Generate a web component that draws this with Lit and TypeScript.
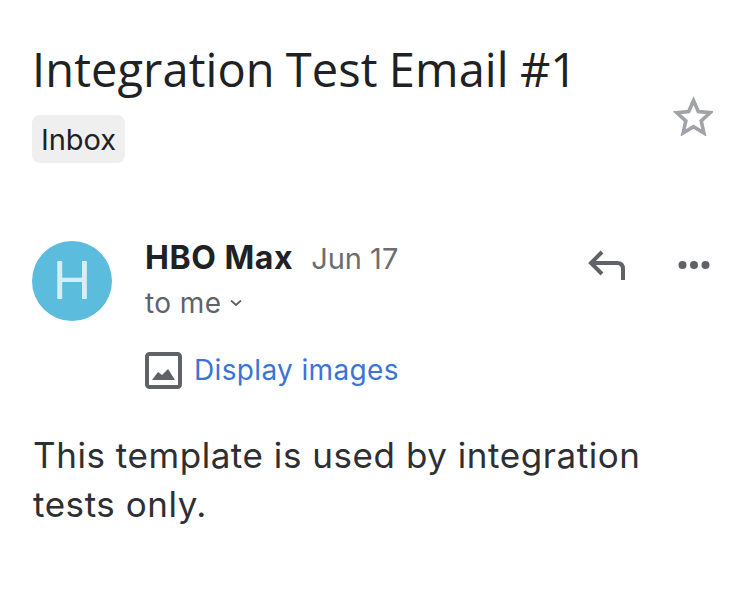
import { LitElement, html, css } from "lit";
import { customElement } from "lit/decorators.js";

@customElement("app-root")
export class AppRoot extends LitElement {
  static styles = css`
    :host { display: block; width: 750px; height: 610px; background: #fff; font-family: Inter, Roboto, "Liberation Sans", sans-serif; color: #202124; overflow: hidden; }
    .page { padding: 38px 40px 0 32px; box-sizing: border-box; height: 610px; display: flex; flex-direction: column; }
    .head { display: flex; justify-content: space-between; align-items: flex-start; height: 125px; }
    .title { margin: 0; font-family: "Open Sans", Roboto, sans-serif; font-weight: 400; font-size: 47px; line-height: 62px; letter-spacing: 0.1px; word-spacing: -1.2px; color: #202124; white-space: nowrap; }
    .chip { display: inline-block; margin-top: 15px; height: 48px; width: 93px; box-sizing: border-box; background: #efefef; border-radius: 8px; font-size: 29px; line-height: 50px; text-align: center; color: #202124; }
    .star { display: block; width: 40px; height: 40px; margin: 58px -3px 0 0; }
    .sender { display: flex; margin-top: 78px; }
    .avatar { width: 80px; height: 80px; border-radius: 50%; background: #5bbcdd; color: #d3f0f8; font-size: 52px; line-height: 80px; text-align: center; flex: none; }
    .info { margin-left: 33px; flex: 1; }
    .line1 { display: flex; align-items: baseline; height: 36px; line-height: 34px; }
    .name { font-weight: 700; font-size: 32px; letter-spacing: 0.55px; color: #202124; }
    .date { font-size: 29px; color: #6c6d70; margin-left: 18px; }
    .line2 { display: flex; align-items: center; font-size: 28px; letter-spacing: 0.4px; color: #5f6368; height: 52px; gap: 8px; }
    .actions { display: flex; align-items: center; gap: 52px; height: 48px; }
    .images { display: flex; align-items: center; margin: 16px 0 0 113px; gap: 12px; color: #3b74d4; font-size: 28px; letter-spacing: 0.35px; height: 50px; }
    .body { margin: 36px 0 0 1px; font-size: 35px; line-height: 49px; letter-spacing: 0.55px; color: #2e2f32; width: 640px; }
    svg { display: block; flex: none; }
  `;

  render() {
    return html`<div class="page">
      <div class="head">
        <div>
          <h1 class="title">Integration Test Email #1</h1>
          <span class="chip">Inbox</span>
        </div>
        <svg class="star" viewBox="0 0 40 40"><path d="M20.500 4.500l4.800 11 12 1.100-9.100 8.200 2.700 12.200-10.400-6.400-10.400 6.400 2.700-12.200-9.100-8.200 12-1.100z" fill="none" stroke="#a1a3a9" stroke-width="3.600"/></svg>
      </div>
      <div class="sender">
        <div class="avatar">H</div>
        <div class="info">
          <div class="line1"><span class="name">HBO Max</span><span class="date">Jun 17</span></div>
          <div class="line2">to me
            <svg width="14" height="8" viewBox="0 0 14 8"><path d="M2 1.500l5 4.500 5-4.500" fill="none" stroke="#5f6368" stroke-width="1.800"/></svg>
          </div>
        </div>
        <div class="actions">
          <svg width="38" height="30" viewBox="0 0 38 30"><path d="M14 2L3 13l11 11M3 13h26q6 0 6 6v11" fill="none" stroke="#5f6368" stroke-width="4"/></svg>
          <svg width="32" height="10" viewBox="0 0 32 10"><circle cx="4.500" cy="5" r="4" fill="#5f6368"/><circle cx="16" cy="5" r="4" fill="#5f6368"/><circle cx="27.500" cy="5" r="4" fill="#5f6368"/></svg>
        </div>
      </div>
      <div class="images">
        <svg width="37" height="37" viewBox="0 0 37 37"><rect x="2" y="2" width="33" height="33" rx="2.500" fill="none" stroke="#5f6368" stroke-width="4"/><path d="M7 28l6-8 4 3 6-6 7 11z" fill="#5f6368"/></svg>
        <span>Display images</span>
      </div>
      <div class="body">This template is used by integration tests only.</div>
    </div>`;
  }
}
